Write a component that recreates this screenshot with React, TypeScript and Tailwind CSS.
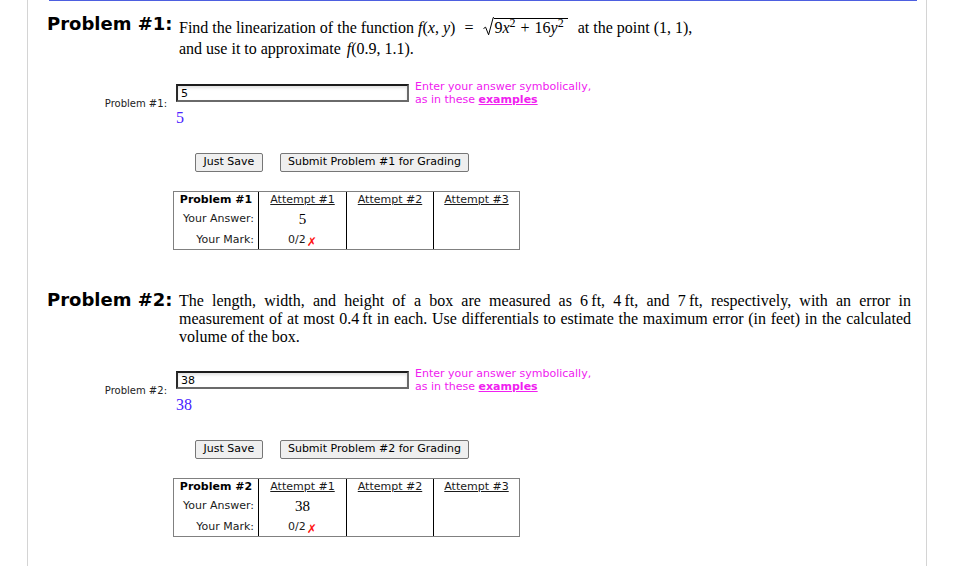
import React from "react";

function Radical() {
  return (
    <svg width="11" height="19" viewBox="0 0 11 19" className="inline-block align-[-3px]">
      <path d="M0.5 11.5 L2.6 10.2 L5.6 17.8 L10.2 0.6 L11 0.6" stroke="#000" strokeWidth="1" fill="none" />
    </svg>
  );
}

function Problem1Text() {
  return (
    <>
      <span className="block leading-[24px]">
        Find the linearization of the function <i>f</i>(<i>x</i>,<span className="ml-[4px]" />
        <i>y</i>)
        <span className="ml-[9px] mr-[10px]">=</span>
        <Radical />
        <span className="inline-block border-t border-black leading-[16px] pt-[1px] pr-[4px]">
          9<i>x</i>
          <sup>2</sup>
          <span className="mx-[5px]">+</span>16<i>y</i>
          <sup>2</sup>
        </span>
        <span className="ml-[10px]">at the point (1, 1),</span>
      </span>
      <span className="block">
        and use it to approximate <i className="ml-[2px]">f</i>(0.9, 1.1).
      </span>
    </>
  );
}

function Problem2Text() {
  return (
    <>
      <span className="block text-justify [text-align-last:justify] whitespace-nowrap">
        The length, width, and height of a box are measured as 6&thinsp;ft, 4&thinsp;ft, and 7&thinsp;ft, respectively, with an error in
      </span>
      <span className="block text-justify [text-align-last:justify]">
        measurement of at most 0.4&thinsp;ft in each. Use differentials to estimate the maximum error (in feet) in the calculated
      </span>
      <span className="block">volume of the box.</span>
    </>
  );
}

function ProblemSection({
  num,
  answer,
  text,
  answerMt,
  className,
}: {
  num: number;
  answer: string;
  text: React.ReactNode;
  answerMt: string;
  className?: string;
}) {
  return (
    <div className={className}>
      <div className="flex items-start">
        <div className="w-[132px] shrink-0 font-['DejaVu_Sans',sans-serif] font-bold text-[18px] leading-[16px] text-black">
          Problem #{num}:
        </div>
        <div className="w-[732px] font-['Liberation_Serif',serif] text-[16px] leading-[18px] text-black">
          {text}
        </div>
      </div>

      <div className={"flex items-center " + answerMt}>
        <div className="w-[120px] text-right font-['DejaVu_Sans',sans-serif] text-[10px] leading-[12px] text-[#222]">
          Problem #{num}:
        </div>
        <div className="ml-[9px]">
          <div className="flex items-center">
            <input
              readOnly
              value={answer}
              className="w-[233px] h-[18px] border-2 border-t-[#1c1c1c] border-l-[#2a2a2a] border-b-[#6a6a6a] border-r-[#6a6a6a] bg-white pl-[3px] font-['DejaVu_Sans',sans-serif] text-[11px] text-black shadow-[inset_0_2px_3px_rgba(0,0,0,0.12)] outline-none"
            />
            <div className="ml-[6px] font-['DejaVu_Sans',sans-serif] text-[11px] leading-[13px] text-[#f020f0]">
              Enter your answer symbolically,
              <br />
              as in these <span className="font-bold underline">examples</span>
            </div>
          </div>
          <div className="mt-[2px] font-['Liberation_Serif',serif] text-[16px] leading-[20px] text-[#4a22ff]">
            {answer}
          </div>
        </div>
      </div>

      <div className="mt-[25px] ml-[148px] flex gap-[17px] font-['DejaVu_Sans',sans-serif] text-[11px] text-black">
        <button className="w-[68px] h-[19px] flex items-center justify-center bg-[#efefef] border border-[#767676] rounded-[2px]">
          Just Save
        </button>
        <button className="w-[189px] h-[19px] flex items-center justify-center bg-[#efefef] border border-[#767676] rounded-[2px]">
          Submit Problem #{num} for Grading
        </button>
      </div>

      <div className="mt-[19px] ml-[126px] flex w-max border border-[#808080] font-['DejaVu_Sans',sans-serif] text-[11px] text-[#1a1a1a]">
        <div className="w-[84px] flex flex-col">
          <div className="h-[17px] flex items-center justify-center font-bold text-black">Problem #{num}</div>
          <div className="h-[20px] flex items-center justify-end pr-[4px]">Your Answer:</div>
          <div className="h-[20px] pt-[3px] flex items-center justify-end pr-[4px]">Your Mark:</div>
        </div>
        <div className="w-[88px] border-l border-black flex flex-col">
          <div className="h-[17px] flex items-center justify-center underline">Attempt #1</div>
          <div className="h-[20px] flex items-center justify-center font-['Liberation_Serif',serif] text-[15px] text-black">
            {answer}
          </div>
          <div className="h-[20px] pt-[3px] flex items-center justify-center">
            0/2<span className="text-[#ff1010] text-[12px] leading-[12px] ml-[1px] translate-y-[1px]">✗</span>
          </div>
        </div>
        <div className="w-[87px] border-l border-black flex flex-col">
          <div className="h-[17px] flex items-center justify-center underline">Attempt #2</div>
        </div>
        <div className="w-[86px] border-l border-black flex flex-col">
          <div className="h-[17px] flex items-center justify-center underline">Attempt #3</div>
        </div>
      </div>
    </div>
  );
}

export default function App() {
  return (
    <div className="bg-white w-[956px] h-[566px] overflow-hidden">
      <div className="ml-[27px] w-[900px] h-[566px] border-l border-r border-[#d4d4d4]">
        <div className="ml-[21px] mr-[9px] h-px bg-[#4d5fe0]" />
        <div className="pl-[19px] pt-[15px]">
          <ProblemSection num={1} answer="5" text={<Problem1Text />} answerMt="mt-[22px]" />
          <ProblemSection
            num={2}
            answer="38"
            text={<Problem2Text />}
            answerMt="mt-[21px]"
            className="mt-[42px]"
          />
        </div>
      </div>
    </div>
  );
}
